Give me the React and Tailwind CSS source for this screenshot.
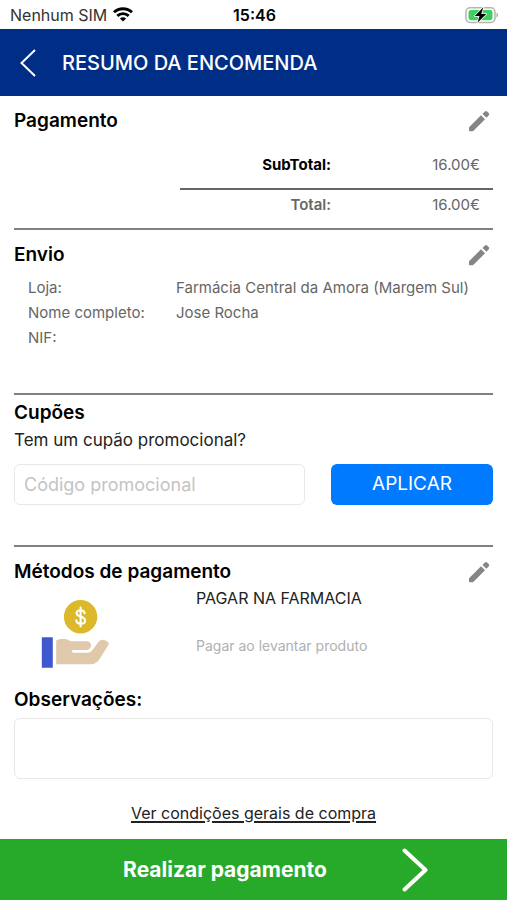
import React, { useState } from "react";

function WifiIcon() {
  return (
    <svg viewBox="0 0 20 15" className="h-[15px] w-5" aria-hidden="true">
      <g fill="none" stroke="#000" strokeWidth="2.9">
        <path d="M1 5.3C6 .5 14 .5 19 5.3" />
        <path d="M4.3 8.9c3.2-3 8.2-3 11.4 0" />
      </g>
      <path d="M10 14.6l-3.1-3.1c1.8-1.6 4.4-1.6 6.2 0z" fill="#000" />
    </svg>
  );
}

function BatteryIcon() {
  return (
    <svg viewBox="0 0 34 18" className="h-[18px] w-[34px]" aria-hidden="true">
      <rect x="1" y="1.8" width="29" height="14.6" rx="4.2" fill="#fff" stroke="#b4b4b4" strokeWidth="1.5" />
      <path d="M31.5 6.6c2 .7 2 4.3 0 5z" fill="#a9a9a9" />
      <rect x="3.500" y="4" width="24" height="10.200" rx="2.400" fill="#3ed160" />
      <path d="M18.3 1.2L9.800 10h4.700l-2 6.800L21.300 8h-5z" fill="#000" stroke="#fff" strokeWidth="1.600" paintOrder="stroke" strokeLinejoin="round" />
    </svg>
  );
}

function PencilIcon() {
  return (
    <svg viewBox="0 0 22 22" className="size-[22px]" fill="#858585" aria-hidden="true">
      <path d="M1 20.200v-2.300c0-.5.2-.8.500-1.100L13 5.300l4 4L5.500 20.700c-.3.300-.6.500-1.100.5H2c-.6 0-1-.4-1-1z" />
      <path d="M14.500 3.900l2.200-2.200c.8-.8 1.700-.8 2.400-.1l1.500 1.500c.8.8.8 1.700 0 2.400l-2.200 2.300z" />
    </svg>
  );
}

function HandCoinIcon() {
  return (
    <svg viewBox="0 0 68 68" className="size-[68px]" aria-hidden="true">
      <circle cx="39.600" cy="16.800" r="16.700" fill="#dcb92b" />
      <path
        d="M43.700 13.200c-.4-2-2-3-4.100-3-2.300 0-4 1.200-4 3.100 0 4.400 8.500 2.500 8.500 7.100 0 2-1.900 3.300-4.300 3.300-2.500 0-4.300-1.100-4.600-3.300M39.600 7.500v19"
        fill="none"
        stroke="#fff"
        strokeWidth="2.100"
        strokeLinecap="round"
      />
      <rect x=".800" y="37.300" width="11" height="30.500" rx=".6" fill="#4058cf" />
      <path
        d="M15.200 40.600c3.800-2.400 9.800-3 14.400.6h15.900c6 0 6 8.700 0 8.800H31.300v2.800h15.200c2.300 0 3.800-.9 5-2.700l5.500-7.600c1.900-2.500 3.900-3 6-2.500 3.200.7 5.300 3 4.800 4.300l-8.600 13.600c-2.800 4.400-5.300 6.300-10.200 6.300H15.200z"
        fill="#e0c8ab"
      />
    </svg>
  );
}

function EditButton({ label }) {
  return (
    <button type="button" aria-label={label} className="mr-[3px] flex">
      <PencilIcon />
    </button>
  );
}

function SectionHeader({ title, edit }) {
  return (
    <div className="flex h-7 items-center justify-between">
      <h2 className="text-[19px] leading-7 font-semibold text-black">{title}</h2>
      {edit && <EditButton label={edit} />}
    </div>
  );
}

const delivery = [
  ["Loja:", "Farmácia Central da Amora (Margem Sul)"],
  ["Nome completo:", "Jose Rocha"],
  ["NIF:", ""],
];

export default function App() {
  const [coupon, setCoupon] = useState("");
  const [notes, setNotes] = useState("");

  return (
    <div className="flex min-h-screen flex-col bg-white font-['Inter','Liberation_Sans',sans-serif] text-[#222]">
      <div className="grid h-[29px] grid-cols-3 items-center pr-2 pl-[10px]">
        <div className="flex items-center gap-[6px] text-base whitespace-nowrap text-[#333]">
          Nenhum SIM <WifiIcon />
        </div>
        <div className="text-center text-base font-semibold text-black">15:46</div>
        <div className="flex justify-end">
          <BatteryIcon />
        </div>
      </div>

      <header className="flex h-[67px] items-center gap-[26px] bg-[#002e87] px-5 text-white">
        <button type="button" aria-label="Voltar" className="flex">
          <svg viewBox="0 0 16 28" className="h-7 w-4" fill="none" stroke="currentColor" strokeWidth="2" aria-hidden="true">
            <path d="M15 1L1.5 14 15 27" />
          </svg>
        </button>
        <h1 className="text-xl font-medium">RESUMO DA ENCOMENDA</h1>
      </header>

      <main className="flex grow flex-col px-[14px]">
        <section className="border-b-2 border-[#808080] pt-[11px] pb-2">
          <SectionHeader title="Pagamento" edit="Editar pagamento" />
          <table className="mt-2 ml-auto w-[313px] text-[15px] text-[#666]">
            <tbody>
              <tr className="h-[46px] border-b-2 border-[#666]">
                <th scope="row" className="w-[151px] p-0 text-right font-bold text-black">SubTotal:</th>
                <td className="p-0 pr-[13px] text-right">16.00€</td>
              </tr>
              <tr className="h-[31px]">
                <th scope="row" className="p-0 text-right font-semibold">Total:</th>
                <td className="p-0 pr-[13px] text-right">16.00€</td>
              </tr>
            </tbody>
          </table>
        </section>

        <section className="border-b-2 border-[#808080] pt-[11px] pb-[43px]">
          <SectionHeader title="Envio" edit="Editar envio" />
          <dl className="mt-[6px] pl-[14px] text-[15px] leading-[25px] text-[#666]">
            {delivery.map(([term, value]) => (
              <div key={term} className="flex">
                <dt className="w-[148px] shrink-0">{term}</dt>
                <dd>{value}</dd>
              </div>
            ))}
          </dl>
        </section>

        <section className="border-b-2 border-[#808080] pt-1 pb-10">
          <SectionHeader title="Cupões" />
          <label htmlFor="coupon" className="mt-px block text-[17px] leading-6">Tem um cupão promocional?</label>
          <div className="mt-3 flex gap-[26px]">
            <input
              id="coupon"
              value={coupon}
              onChange={(e) => setCoupon(e.target.value)}
              placeholder="Código promocional"
              className="h-[41px] min-w-0 grow rounded-md border border-[#e8e8e8] px-[9px] text-lg placeholder:text-[#c4c4c4]"
            />
            <button type="button" className="h-[41px] w-[162px] shrink-0 rounded-md bg-[#007aff] text-[19px] text-white">
              APLICAR
            </button>
          </div>
        </section>

        <section className="pt-[11px]">
          <SectionHeader title="Métodos de pagamento" edit="Editar método de pagamento" />
          <div className="flex">
            <div className="w-[182px] shrink-0 pt-[14px] pl-[27px]">
              <HandCoinIcon />
            </div>
            <div>
              <p className="text-base leading-6">PAGAR NA FARMACIA</p>
              <p className="mt-6 text-sm leading-6 text-[#b0b0b0]">Pagar ao levantar produto</p>
            </div>
          </div>
        </section>

        <section className="pt-[18px]">
          <label htmlFor="notes" className="block text-[19px] leading-7 font-semibold text-black">Observações:</label>
          <textarea
            id="notes"
            value={notes}
            onChange={(e) => setNotes(e.target.value)}
            className="mt-1 block h-[61px] w-full resize-none rounded-md border border-[#e8e8e8] p-2 text-[15px]"
          />
        </section>

        <a href="#condicoes" className="mt-[22px] mb-3 self-center text-base leading-6 underline decoration-2 underline-offset-2">
          Ver condições gerais de compra
        </a>
      </main>

      <button type="button" className="flex h-[61px] w-full items-center justify-center gap-[75px] bg-[#27aa2a] pl-11 text-white">
        <span className="text-[21px] font-bold">Realizar pagamento</span>
        <svg viewBox="0 0 26 44" className="h-11 w-[26px]" fill="none" stroke="currentColor" strokeWidth="4" strokeLinecap="round" strokeLinejoin="round" aria-hidden="true">
          <path d="M2.5 2.5L23.5 22l-21 19.5" />
        </svg>
      </button>
    </div>
  );
}
